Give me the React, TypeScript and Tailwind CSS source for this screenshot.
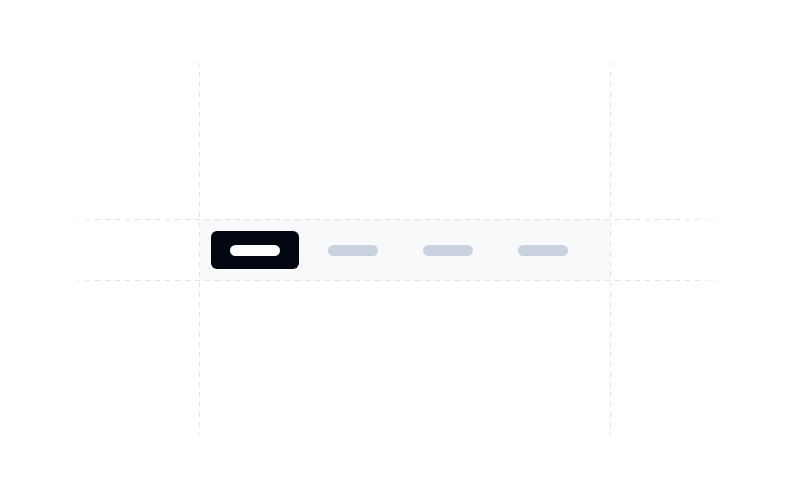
import React from 'react';

const tabs = ['one', 'two', 'three', 'four'];

// dashed guide lines drawn over the page
const HLine = ({ top }: { top: string }) => (
  <div
    className={`absolute left-[65px] w-[662px] h-px ${top} bg-[repeating-linear-gradient(to_right,#e2e4e8_0_5px,transparent_5px_10px)] [mask-image:linear-gradient(to_right,transparent,black_5%,black_95%,transparent)]`}
  />
);

const VLine = ({ left }: { left: string }) => (
  <div
    className={`absolute top-[52px] h-[392px] w-px ${left} bg-[repeating-linear-gradient(to_bottom,#e2e4e8_0_5px,transparent_5px_10px)] [mask-image:linear-gradient(to_bottom,transparent,black_5%,black_95%,transparent)]`}
  />
);

export default function App() {
  return (
    <div className="relative w-[800px] h-[500px] bg-white overflow-hidden">
      <div className="pt-[219px] pl-[200px]">
        <div className="flex items-center w-[410px] h-[62px] pl-[11px] bg-[#f8f9fb] rounded-r-[4px]">
          {tabs.map((t, i) =>
            i === 0 ? (
              <button
                key={t}
                type="button"
                className="flex items-center justify-center w-[88px] h-[38px] rounded-[6px] bg-[#030712]"
                aria-label={t}
              >
                <span className="block w-[50px] h-[11px] rounded-full bg-white" />
              </button>
            ) : (
              <span
                key={t}
                className={`block w-[50px] h-[11px] rounded-full bg-[#cbd2df] ${i === 1 ? 'ml-[29px]' : 'ml-[45px]'}`}
              />
            )
          )}
        </div>
      </div>

      <HLine top="top-[219px]" />
      <HLine top="top-[280px]" />
      <VLine left="left-[199px]" />
      <VLine left="left-[610px]" />
    </div>
  );
}
